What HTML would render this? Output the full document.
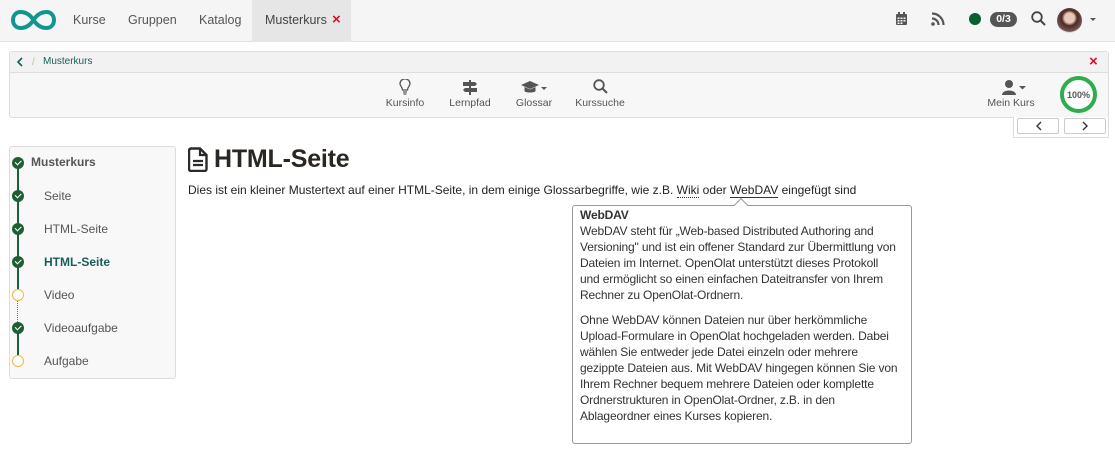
<!DOCTYPE html>
<html><head><meta charset="utf-8"><style>
*{margin:0;padding:0;box-sizing:border-box}
body{width:1115px;height:456px;background:#fff;font-family:"Liberation Sans",sans-serif;color:#333;position:relative;overflow:hidden;font-size:12px}
.a{position:absolute;white-space:nowrap}
.nav{left:0;top:0;width:1115px;height:42px;background:#f5f5f5;border-bottom:1px solid #e0e0e0}
.ni{font-size:12.5px;color:#555;top:13px}
.lbl{font-size:10.5px;color:#555;top:97px;text-align:center;width:70px}
.mi{font-size:12px;color:#555}
.dot{position:absolute;width:12px;height:12px;border-radius:50%;background:#1e5e33;left:12px}
.dot::after{content:"";position:absolute;left:3px;top:3px;width:5px;height:2.5px;border-left:1.5px solid #fff;border-bottom:1.5px solid #fff;transform:rotate(-45deg)}
.odot{position:absolute;width:12px;height:12px;border-radius:50%;border:1.5px solid #f4b93c;background:#fff;left:12px}
.pl{font-size:12px;line-height:16px;color:#333;letter-spacing:-0.15px}
</style></head><body>
<div class="a nav"></div>
<svg class="a" style="left:11px;top:10px" width="45" height="20" viewBox="0 0 45 20"><path d="M22.5 10 C18 3,13 2,9.5 2 C5 2,2 5.5,2 10 C2 14.5,5 18,9.5 18 C13 18,18 17,22.5 10 C27 3,32 2,35.5 2 C40 2,43 5.5,43 10 C43 14.5,40 18,35.5 18 C32 18,27 17,22.5 10Z" fill="none" stroke="#13958f" stroke-width="4"/></svg>
<div class="a ni" style="left:73px">Kurse</div>
<div class="a ni" style="left:128px">Gruppen</div>
<div class="a ni" style="left:199px">Katalog</div>
<div class="a" style="left:252px;top:0;width:99px;height:42px;background:#e6e6e6"></div>
<div class="a ni" style="left:265px;color:#444">Musterkurs</div>
<div class="a" style="left:332px;top:11px;color:#e30b2e;font-size:15px;font-weight:bold">×</div>
<svg class="a" style="left:895px;top:12px" width="13" height="14" viewBox="0 0 13 14"><rect x="1" y="2" width="11" height="11" rx="1" fill="#555"/><rect x="3" y="0" width="2" height="3" fill="#555"/><rect x="8" y="0" width="2" height="3" fill="#555"/><g fill="#f5f5f5"><rect x="2.5" y="5.5" width="2" height="1.5"/><rect x="5.5" y="5.5" width="2" height="1.5"/><rect x="8.5" y="5.5" width="2" height="1.5"/><rect x="2.5" y="8" width="2" height="1.5"/><rect x="5.5" y="8" width="2" height="1.5"/><rect x="8.5" y="8" width="2" height="1.5"/><rect x="2.5" y="10.5" width="2" height="1.5"/><rect x="5.5" y="10.5" width="2" height="1.5"/></g></svg>
<svg class="a" style="left:931px;top:12px" width="14" height="14" viewBox="0 0 14 14"><circle cx="2" cy="12" r="1.8" fill="#555"/><path d="M1 6.5A6.5 6.5 0 0 1 7.5 13M1 1.5A11.5 11.5 0 0 1 12.5 13" fill="none" stroke="#555" stroke-width="2.2"/></svg>
<div class="a" style="left:969px;top:13px;width:12px;height:12px;border-radius:50%;background:#0b5e2d"></div>
<div class="a" style="left:990px;top:12px;width:27px;height:15px;border-radius:8px;background:#555;color:#fff;font-size:10.5px;font-weight:bold;text-align:center;line-height:15px">0/3</div>
<svg class="a" style="left:1031px;top:11px" width="15" height="15" viewBox="0 0 15 15"><circle cx="6" cy="6" r="4.8" fill="none" stroke="#444" stroke-width="1.8"/><path d="M9.5 9.5L14 14" stroke="#444" stroke-width="2"/></svg>
<div class="a" style="left:1057px;top:8px;width:25px;height:25px;border-radius:50%;background:radial-gradient(circle at 50% 40%,#e8c8b8 0 25%,#4a2a22 40%,#7a5a5a 70%,#ddd 72%)"></div>
<div class="a" style="left:1090px;top:18px;border-left:3px solid transparent;border-right:3px solid transparent;border-top:3px solid #555"></div>

<div class="a" style="left:9px;top:51px;width:1100px;height:67px;border:1px solid #ddd;border-radius:3px;background:#f7f7f7"></div>
<div class="a" style="left:10px;top:52px;width:1098px;height:21px;background:#f2f2f2;border-bottom:1px solid #ddd"></div>
<svg class="a" style="left:16px;top:57px" width="8" height="10" viewBox="0 0 8 10"><path d="M6 1L2 5l4 4" fill="none" stroke="#175e5a" stroke-width="1.6"/></svg>
<div class="a" style="left:32px;top:57px;color:#bbb;font-size:10px">/</div>
<div class="a" style="left:43px;top:56px;color:#175e5a;font-size:10px">Musterkurs</div>
<div class="a" style="left:1089px;top:53px;color:#e30b2e;font-size:15px;font-weight:bold">×</div>

<svg class="a" style="left:399px;top:79px" width="12" height="16" viewBox="0 0 12 16"><path d="M3.5 11C3.5 8,1 7,1 4.8A5 5 0 0 1 11 4.8C11 7,8.5 8,8.5 11Z" fill="none" stroke="#555" stroke-width="1.3"/><path d="M4 13h4M4.5 15h3" stroke="#555" stroke-width="1.3"/></svg>
<svg class="a" style="left:462px;top:80px" width="16" height="15" viewBox="0 0 16 15"><rect x="7" y="0" width="2" height="15" fill="#555"/><path d="M1 2h12l2 2-2 2H1zM15 8H3L1 10l2 2h12z" fill="#555"/></svg>
<svg class="a" style="left:521px;top:81px" width="26" height="14" viewBox="0 0 26 14"><path d="M9 0L18 4 9 8 0 4z" fill="#555"/><path d="M3.5 6v4c0 2 11 2 11 0V6L9 8.5z" fill="#555"/><path d="M20 6h6l-3 3z" fill="#555"/></svg>
<svg class="a" style="left:593px;top:79px" width="15" height="15" viewBox="0 0 15 15"><circle cx="6" cy="6" r="4.8" fill="none" stroke="#555" stroke-width="1.8"/><path d="M9.5 9.5L14 14" stroke="#555" stroke-width="2"/></svg>
<div class="a lbl" style="left:370px">Kursinfo</div>
<div class="a lbl" style="left:435px">Lernpfad</div>
<div class="a lbl" style="left:499px">Glossar</div>
<div class="a lbl" style="left:565px">Kurssuche</div>
<svg class="a" style="left:1002px;top:80px" width="28" height="16" viewBox="0 0 28 16"><circle cx="7" cy="4" r="4" fill="#555"/><path d="M0 15c0-6 14-6 14 0z" fill="#555"/><path d="M17 6h7l-3.5 3.5z" fill="#555"/></svg>
<div class="a" style="left:984px;top:97px;font-size:10.5px;color:#555;width:54px;text-align:center">Mein Kurs</div>
<svg class="a" style="left:1059px;top:75px" width="40" height="40" viewBox="0 0 40 40"><circle cx="19.5" cy="19.5" r="16.5" fill="#fff" stroke="#2eac4e" stroke-width="4"/><text x="19.5" y="23" text-anchor="middle" font-family="Liberation Sans" font-size="9" font-weight="bold" fill="#555">100%</text></svg>
<div class="a" style="left:1013px;top:117px;width:96px;height:21px;border:1px solid #ddd;border-top:none;background:#fff"></div>
<div class="a" style="left:1017px;top:118px;width:42px;height:16px;border:1px solid #ccc;border-radius:2px"></div>
<div class="a" style="left:1064px;top:118px;width:42px;height:16px;border:1px solid #ccc;border-radius:2px"></div>
<svg class="a" style="left:1035px;top:121px" width="8" height="10" viewBox="0 0 8 10"><path d="M6 1L2 5l4 4" fill="none" stroke="#333" stroke-width="1.4"/></svg>
<svg class="a" style="left:1081px;top:121px" width="8" height="10" viewBox="0 0 8 10"><path d="M2 1l4 4-4 4" fill="none" stroke="#333" stroke-width="1.4"/></svg>

<div class="a" style="left:9px;top:146px;width:167px;height:233px;background:#f8f8f8;border:1px solid #ddd;border-radius:3px"></div>
<div class="a" style="left:17px;top:162px;width:2px;height:132px;background:#1e5e33"></div>
<div class="a" style="left:17px;top:300px;width:0;height:28px;border-left:1px dotted #777"></div>
<div class="a" style="left:17px;top:330px;width:2px;height:28px;background:#1e5e33"></div>
<div class="dot" style="top:157px"></div>
<div class="dot" style="top:190px"></div>
<div class="dot" style="top:223px"></div>
<div class="dot" style="top:256px"></div>
<div class="odot" style="top:289px"></div>
<div class="dot" style="top:322px"></div>
<div class="odot" style="top:355px"></div>
<div class="a mi" style="left:31px;top:155px;font-weight:bold;color:#555">Musterkurs</div>
<div class="a mi" style="left:44px;top:189px">Seite</div>
<div class="a mi" style="left:44px;top:222px">HTML-Seite</div>
<div class="a mi" style="left:44px;top:255px;font-weight:bold;color:#175e5a">HTML-Seite</div>
<div class="a mi" style="left:44px;top:288px">Video</div>
<div class="a mi" style="left:44px;top:321px">Videoaufgabe</div>
<div class="a mi" style="left:44px;top:354px">Aufgabe</div>

<svg class="a" style="left:188px;top:147px" width="20" height="25" viewBox="0 0 20 25"><path d="M3 1.5h9l6.5 6.5v14a2 2 0 0 1-2 2H3a2 2 0 0 1-2-2v-18.5a2 2 0 0 1 2-2z" fill="none" stroke="#2a2a2a" stroke-width="2.4"/><path d="M12 1.5v6.5h6.5" fill="none" stroke="#2a2a2a" stroke-width="2.2"/><path d="M5 14h10M5 18h10" stroke="#2a2a2a" stroke-width="2.2"/></svg>
<div class="a" style="left:214px;top:145px;font-size:25px;font-weight:bold;color:#2a2622;letter-spacing:-0.2px">HTML-Seite</div>
<div class="a" style="left:188px;top:183px;font-size:12px;color:#222">Dies ist ein kleiner Mustertext auf einer HTML-Seite, in dem einige Glossarbegriffe, wie z.B. <span style="border-bottom:1px dotted #333">Wiki</span> oder <span style="border-bottom:1px solid #335">WebDAV</span> eingefügt sind</div>

<div class="a" style="left:572px;top:205px;width:340px;height:239px;border:1px solid #999;border-radius:3px;background:#fff"></div>
<div class="a" style="left:736px;top:200px;width:10px;height:10px;background:#fff;border-left:1px solid #999;border-top:1px solid #999;transform:rotate(45deg)"></div>
<div class="a pl" style="left:580px;top:207px"><b>WebDAV</b><br>WebDAV steht für „Web-based Distributed Authoring and<br>Versioning" und ist ein offener Standard zur Übermittlung von<br>Dateien im Internet. OpenOlat unterstützt dieses Protokoll<br>und ermöglicht so einen einfachen Dateitransfer von Ihrem<br>Rechner zu OpenOlat-Ordnern.</div>
<div class="a pl" style="left:580px;top:312px">Ohne WebDAV können Dateien nur über herkömmliche<br>Upload-Formulare in OpenOlat hochgeladen werden. Dabei<br>wählen Sie entweder jede Datei einzeln oder mehrere<br>gezippte Dateien aus. Mit WebDAV hingegen können Sie von<br>Ihrem Rechner bequem mehrere Dateien oder komplette<br>Ordnerstrukturen in OpenOlat-Ordner, z.B. in den<br>Ablageordner eines Kurses kopieren.</div>
</body></html>
